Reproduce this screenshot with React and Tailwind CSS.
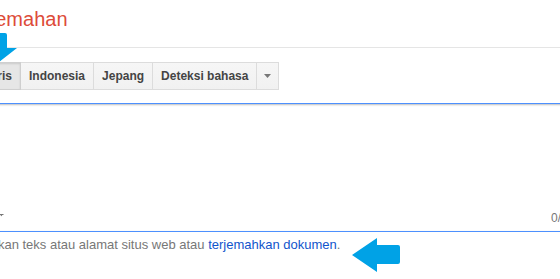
import React from "react";

function LangButton({ label, selected, first }) {
  return (
    <div
      className={
        "h-[28px] px-2 flex items-center justify-center text-[12px] font-bold text-[#444] border-y border-r whitespace-nowrap " +
        (first ? "border-l " : "") +
        (selected
          ? "bg-[#e6e6e6] border-[#cfcfcf] shadow-[inset_0_1px_2px_rgba(0,0,0,0.12)]"
          : "bg-linear-to-b from-[#f6f6f6] to-[#f1f1f1] border-[#dcdcdc]")
      }
    >
      {label}
    </div>
  );
}

export default function App() {
  return (
    <div className="relative w-[560px] h-[279px] overflow-hidden bg-white font-['Liberation_Sans',Arial,sans-serif]">
      <div className="ml-[-37px] w-[720px]">
        <div className="h-[47px] pt-[9px] text-[20px] leading-[20px] text-[#dd4b39]">
          Terjemahan
        </div>
        <div className="border-t border-[#e5e5e5]" />
        <div className="mt-[14px] flex">
          <LangButton label="Inggris" selected first />
          <LangButton label="Indonesia" />
          <LangButton label="Jepang" />
          <LangButton label="Deteksi bahasa" />
          <div className="h-[28px] w-[22px] flex items-center justify-center border-y border-r border-[#dcdcdc] bg-linear-to-b from-[#f6f6f6] to-[#f1f1f1]">
            <svg width="7" height="4" viewBox="0 0 7 4">
              <path d="M0 0 L7 0 L3.5 4 Z" fill="#777" />
            </svg>
          </div>
        </div>
        <div className="mt-[13px] h-[129px] w-[720px] border border-[#4d90fe] shadow-[inset_0_1px_2px_rgba(0,0,0,0.25)] flex flex-col">
          <div className="flex-1" />
          <div className="flex items-end pb-[7px] h-[19px]">
            <svg className="ml-[33px] mb-[7px]" width="7" height="4" viewBox="0 0 7 4">
              <path d="M1 1.5 L6.5 1.5 M5 1.5 L4 3" stroke="#777" strokeWidth="1.2" fill="none" />
            </svg>
            <div className="ml-[547px] text-[12px] leading-[12px] text-[#777]">0/5000</div>
          </div>
        </div>
        <div className="mt-[6px] ml-[6px] text-[13px] leading-[13px] text-[#777] whitespace-nowrap">
          Ketikkan teks atau alamat situs web atau{" "}
          <span className="text-[#1155cc]">terjemahkan dokumen</span>.
        </div>
      </div>
      <svg
        className="absolute left-0 top-0 pointer-events-none"
        width="560"
        height="279"
        viewBox="0 0 560 279"
      >
        <path
          d="M-9 35 Q-9 33 -7 33 L5 33 Q7 33 7 35 L7 48 L17 48 L-1 62 L-19 48 L-9 48 Z"
          fill="#00a2e6"
        />
        <path
          d="M352 255 L377 238 L377 245 L398 245 Q400 245 400 247 L400 262 Q400 264 398 264 L377 264 L377 272 Z"
          fill="#00a2e6"
        />
      </svg>
    </div>
  );
}
